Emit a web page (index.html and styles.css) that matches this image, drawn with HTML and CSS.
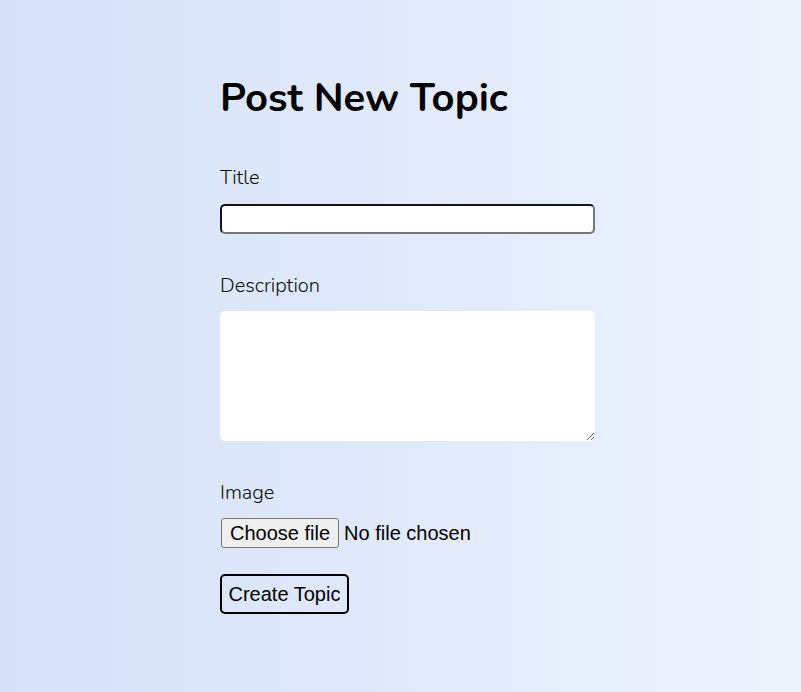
FILE: index.html
```html
<!DOCTYPE html>
<html lang="en">
<head>
<meta charset="utf-8">
<title>Post New Topic</title>
<link rel="stylesheet" href="styles.css">
</head>
<body>
<main class="page">
  <h1 class="heading">Post New Topic</h1>
  <form class="topic-form">
    <div class="field field-title">
      <label class="label" for="title">Title</label>
      <input class="text-input" id="title" type="text">
    </div>
    <div class="field field-desc">
      <label class="label label-tight" for="desc">Description</label>
      <textarea class="textarea" id="desc"></textarea>
    </div>
    <div class="field field-image">
      <span class="label label-tight">Image</span>
      <div class="file-row">
        <input class="file-hidden" id="img" type="file">
        <label class="file-button" for="img">Choose file</label>
        <span class="file-status">No file chosen</span>
      </div>
    </div>
    <div class="actions">
      <button class="submit" type="submit">Create Topic</button>
    </div>
  </form>
</main>
</body>
</html>
```
FILE: styles.css
```css
html, body {
  margin: 0;
  height: 100%;
}
body {
  background: linear-gradient(90deg, #d4e1f8 0%, #eef3fd 100%);
  font-family: "Nunito", "Lato", "Noto Sans", sans-serif;
  color: #111;
}
.page {
  width: 375px;
  margin-left: 220px;
  padding-top: 74px;
}
.heading {
  margin: 0 0 44px 0;
  font-size: 40px;
  line-height: 48px;
  font-weight: 700;
  color: #000;
}
.topic-form {
  display: flex;
  flex-direction: column;
}
.field {
  display: flex;
  flex-direction: column;
  align-items: flex-start;
  margin-bottom: 40px;
}
.field-image {
  margin-bottom: 26px;
}
.label {
  display: block;
  font-size: 20px;
  font-weight: 300;
  line-height: 24px;
  margin-bottom: 14px;
  color: #0c0c0c;
}
.label-tight {
  margin-bottom: 13px;
}
.text-input {
  box-sizing: border-box;
  width: 375px;
  height: 30px;
  margin: 0;
  padding: 2px 6px;
  border: 2px solid;
  border-color: #151515 #767676 #767676 #151515;
  border-radius: 5px;
  background: #fff;
  font-size: 16px;
}
.textarea {
  box-sizing: border-box;
  width: 375px;
  height: 130px;
  margin: 0;
  border: none;
  border-radius: 5px;
  background: #fff;
  display: block;
}
.file-row {
  display: flex;
  align-items: center;
  font-family: "Liberation Sans", Arial, sans-serif;
  font-size: 20px;
  line-height: 24px;
  color: #000;
}
.file-hidden {
  position: absolute;
  width: 1px;
  height: 1px;
  opacity: 0;
  overflow: hidden;
}
.file-button {
  padding: 2px 8px;
  margin-left: 1px;
  margin-right: 5px;
  background: #efefef;
  border: 1px solid #767676;
  border-radius: 3px;
  color: #000;
}
.file-status {
  color: #000;
}
.actions {
  display: flex;
}
.submit {
  margin: 0;
  padding: 6px 6.5px;
  font-family: "Liberation Sans", Arial, sans-serif;
  font-size: 20px;
  line-height: 24px;
  color: #000;
  background: transparent;
  border: 2px solid #000;
  border-radius: 5px;
}
```
